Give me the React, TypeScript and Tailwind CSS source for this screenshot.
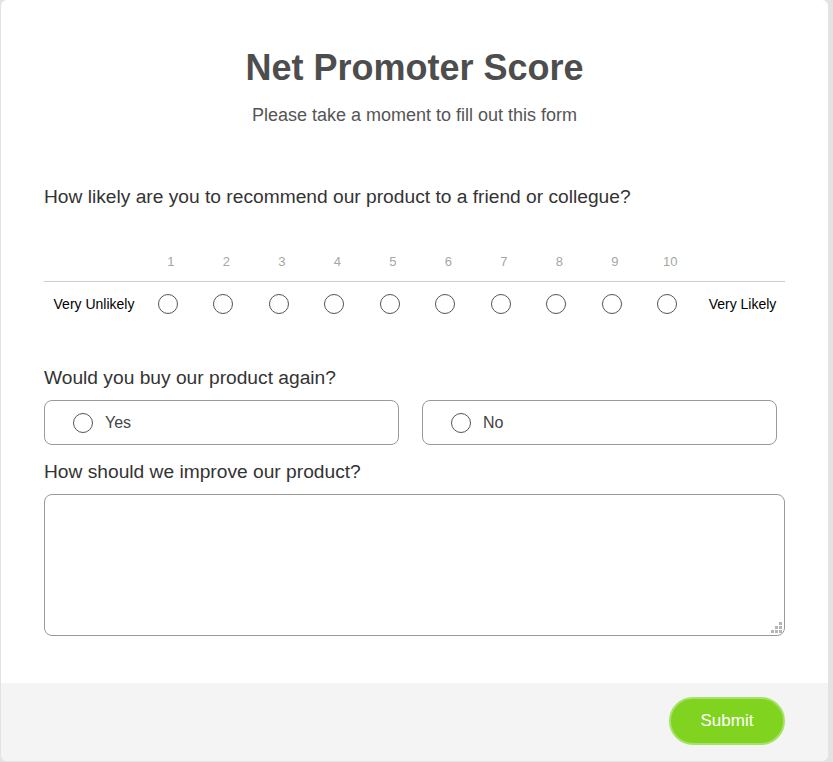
import React from "react";

const Radio = () => (
  <span className="block w-[20px] h-[20px] rounded-full border border-[#555] bg-white shrink-0" />
);

export default function App() {
  const nums = [1, 2, 3, 4, 5, 6, 7, 8, 9, 10];
  return (
    <div className="w-[833px] h-[762px] bg-[#e3e3e3] pl-px pr-[5px] font-['Liberation_Sans',Arial,sans-serif]">
      <div className="h-[761px] bg-white rounded-md flex flex-col overflow-hidden">
        <div className="flex-1 px-[43px] pt-[48px]">
          <h1 className="text-center text-[36px] leading-[40px] font-bold text-[#4d4d4d]">
            Net Promoter Score
          </h1>
          <p className="text-center text-[18px] leading-6 text-[#555] mt-[15px]">
            Please take a moment to fill out this form
          </p>
          <p className="text-[19.2px] leading-6 text-[#333] mt-[58px]">
            How likely are you to recommend our product to a friend or collegue?
          </p>
          <div className="mt-[45px]">
            <div className="grid grid-cols-[96px_repeat(10,minmax(0,1fr))_90px] border-b border-[#ccc] pb-[11px]">
              <div />
              {nums.map((n) => (
                <div key={n} className="text-center pl-[6px] text-[13px] leading-4 text-[#a6a6a6]">
                  {n}
                </div>
              ))}
              <div />
            </div>
            <div className="grid grid-cols-[96px_repeat(10,minmax(0,1fr))_90px] h-[44px] items-center">
              <div className="text-center text-[14px] text-black pl-[4px]">Very Unlikely</div>
              {nums.map((n) => (
                <div key={n} className="flex justify-center">
                  <Radio />
                </div>
              ))}
              <div className="text-center text-[14px] text-black pl-[5px]">Very Likely</div>
            </div>
          </div>
          <p className="text-[19.2px] leading-6 text-[#333] mt-[40px]">
            Would you buy our product again?
          </p>
          <div className="flex gap-[23px] mt-[10px] w-[733px]">
            {["Yes", "No"].map((o) => (
              <div
                key={o}
                className="flex-1 h-[45px] rounded-lg border border-[#999] flex items-center pl-[28px] gap-[12px]"
              >
                <Radio />
                <span className="text-[16px] text-[#444]">{o}</span>
              </div>
            ))}
          </div>
          <p className="text-[19.2px] leading-6 text-[#333] mt-[15px]">
            How should we improve our product?
          </p>
          <div className="relative mt-[10px]">
            <textarea className="block w-full h-[142px] rounded-lg border border-[#999] outline-none resize-none p-2 text-[16px]" />
            <svg
              className="absolute right-[3px] bottom-[3px]"
              width="11"
              height="11"
              viewBox="0 0 11 11"
            >
              <g fill="#b5b5b5">
                <rect x="8" y="0" width="3" height="3" />
                <rect x="4" y="4" width="3" height="3" />
                <rect x="8" y="4" width="3" height="3" />
                <rect x="0" y="8" width="3" height="3" />
                <rect x="4" y="8" width="3" height="3" />
                <rect x="8" y="8" width="3" height="3" />
              </g>
            </svg>
          </div>
        </div>
        <div className="h-[78px] bg-[#f4f4f4] flex justify-end items-start pt-[14px] pr-[43px]">
          <button className="w-[116px] h-[48px] rounded-full bg-[#80d41f] border-2 border-[#a6e266] text-white text-[17px]">
            Submit
          </button>
        </div>
      </div>
    </div>
  );
}
